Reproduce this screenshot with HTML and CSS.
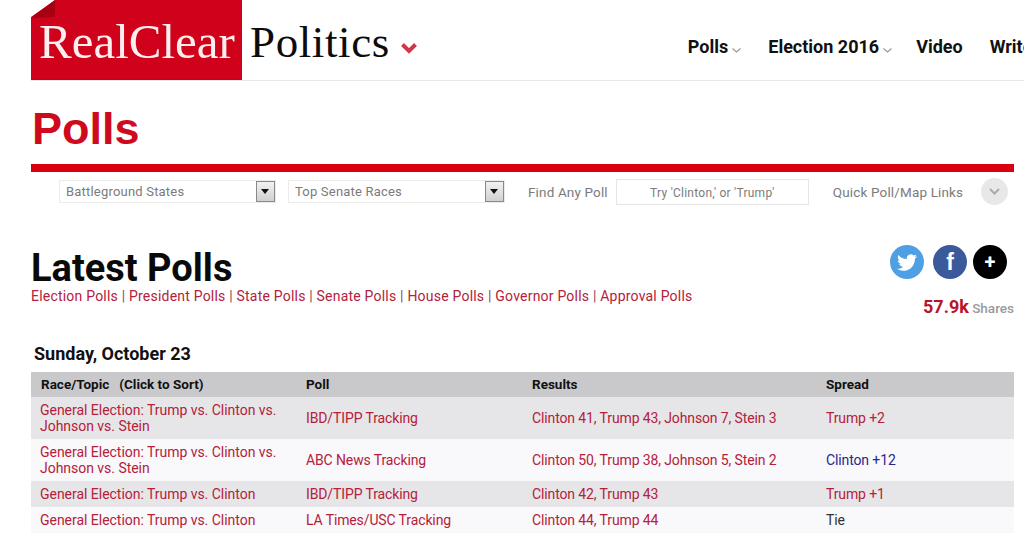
FILE: index.html
```html
<!DOCTYPE html>
<html lang="en">
<head>
<meta charset="utf-8">
<title>Polls - RealClearPolitics</title>
<link rel="stylesheet" href="styles.css">
</head>
<body>
<header class="site-header">
  <a class="logo-red">
    <svg class="fold" width="25" height="18" viewBox="0 0 25 18"><path d="M0 18V17L24 0H0Z" fill="#fff"/><path d="M0 18L24 0V17Z" fill="#a80012"/></svg>
    <span class="logo-red-text">RealClear</span>
  </a>
  <span class="logo-black">Politics</span>
  <svg class="logo-caret" width="18" height="12" viewBox="0 0 18 12"><path d="M2.500 2.500L9 9L15.500 2.500" fill="none" stroke="#d0384a" stroke-width="4"/></svg>
  <nav class="main-nav">
    <a class="nav-item">Polls<svg class="nav-caret" width="9" height="5" viewBox="0 0 9 5"><path d="M.5.5L4.500 4L8.500.5" fill="none" stroke="#999" stroke-width="1.2"/></svg></a>
    <a class="nav-item">Election 2016<svg class="nav-caret" width="9" height="5" viewBox="0 0 9 5"><path d="M.5.5L4.500 4L8.500.5" fill="none" stroke="#999" stroke-width="1.2"/></svg></a>
    <a class="nav-item">Video</a>
    <a class="nav-item">Writers</a>
  </nav>
</header>
<main class="content">
  <h1 class="page-title">Polls</h1>
  <div class="filters">
    <div class="select"><span>Battleground States</span><i class="select-btn"></i></div>
    <div class="select"><span>Top Senate Races</span><i class="select-btn"></i></div>
    <span class="filter-label find-label">Find Any Poll</span>
    <div class="search">Try 'Clinton,' or 'Trump'</div>
    <span class="filter-label quick-label">Quick Poll/Map Links</span>
    <span class="quick-btn"><svg width="11" height="7" viewBox="0 0 11 7"><path d="M1 1L5.500 5.500L10 1" fill="none" stroke="#aaa" stroke-width="2"/></svg></span>
  </div>
  <section class="latest">
    <div class="latest-main">
      <h2 class="latest-title">Latest Polls</h2>
      <p class="poll-links"><a>Election Polls</a> | <a>President Polls</a> | <a>State Polls</a> | <a>Senate Polls</a> | <a>House Polls</a> | <a>Governor Polls</a> | <a>Approval Polls</a></p>
    </div>
    <div class="social">
      <div class="social-icons">
        <span class="circle twitter"><svg width="20" height="17" viewBox="0 0 24 20"><path fill="#fff" d="M24 2.400c-.9.400-1.800.700-2.800.800 1-.6 1.800-1.600 2.200-2.700-1 .6-2 1-3.100 1.200C19.300.7 18 0 16.600 0c-2.700 0-4.900 2.200-4.900 4.900 0 .4 0 .8.100 1.100C7.700 5.800 4.100 3.900 1.700.9 1.200 1.600 1 2.500 1 3.400c0 1.700.9 3.200 2.200 4.100-.8 0-1.600-.2-2.200-.6v.1c0 2.400 1.700 4.400 3.900 4.800-.4.100-.8.200-1.300.2-.3 0-.6 0-.9-.1.600 2 2.400 3.400 4.600 3.400-1.700 1.300-3.800 2.100-6.100 2.100-.4 0-.8 0-1.200-.1C2.200 19.200 4.800 20 7.500 20c9.100 0 14-7.500 14-14v-.6c1-.7 1.800-1.600 2.500-2.600z"/></svg></span>
        <span class="circle facebook">f</span>
        <span class="circle more">+</span>
      </div>
      <p class="shares"><b>57.9k</b> Shares</p>
    </div>
  </section>
  <h3 class="date">Sunday, October 23</h3>
  <table class="polls">
    <colgroup><col class="col-race"><col class="col-poll"><col class="col-results"><col class="col-spread"></colgroup>
    <thead>
      <tr><th>Race/Topic &nbsp; (Click to Sort)</th><th>Poll</th><th>Results</th><th>Spread</th></tr>
    </thead>
    <tbody>
      <tr class="odd"><td>General Election: Trump vs. Clinton vs. Johnson vs. Stein</td><td>IBD/TIPP Tracking</td><td>Clinton 41, Trump 43, Johnson 7, Stein 3</td><td>Trump +2</td></tr>
      <tr><td>General Election: Trump vs. Clinton vs. Johnson vs. Stein</td><td>ABC News Tracking</td><td>Clinton 50, Trump 38, Johnson 5, Stein 2</td><td class="blue">Clinton +12</td></tr>
      <tr class="odd"><td>General Election: Trump vs. Clinton</td><td>IBD/TIPP Tracking</td><td>Clinton 42, Trump 43</td><td>Trump +1</td></tr>
      <tr><td>General Election: Trump vs. Clinton</td><td>LA Times/USC Tracking</td><td>Clinton 44, Trump 44</td><td class="tie">Tie</td></tr>
    </tbody>
  </table>
</main>
</body>
</html>
```
FILE: styles.css
```css
* { box-sizing: border-box; }
html, body { margin: 0; padding: 0; }
body {
  width: 1024px;
  height: 534px;
  overflow: hidden;
  background: #fff;
  color: #000;
  font-family: Roboto, "Liberation Sans", sans-serif;
}
.site-header {
  display: flex;
  align-items: flex-start;
  height: 81px;
  margin-left: 31px;
  border-bottom: 1px solid #e8e8e8;
  overflow: hidden;
}
.logo-red {
  position: relative;
  display: block;
  flex: none;
  width: 211px;
  height: 80px;
  background: #d0021b;
  border-bottom: 1px solid #a8101f;
  padding: 17px 0 0 8px;
}
.fold { position: absolute; top: 0; left: 0; }
.logo-red-text, .logo-black {
  font-family: "Liberation Serif", serif;
  line-height: 50px;
  display: block;
}
.logo-red-text { font-size: 49px; color: #fbeeee; white-space: nowrap; }
.logo-black { font-size: 45px; margin: 17px 0 0 8px; letter-spacing: .6px; color: #0c0c0c; }
.logo-caret { flex: none; margin: 42px 0 0 10px; }
.main-nav {
  display: flex;
  flex: none;
  margin: 36px 0 0 270px;
  gap: 27px;
  font-size: 18px;
  line-height: 21px;
  font-weight: 700;
  color: #111;
  white-space: nowrap;
}
.nav-item { display: block; }
.nav-item:nth-child(3) { margin-left: -3px; }
.nav-caret { margin-left: 4px; vertical-align: 0; }
.content { margin: 0 10px 0 31px; }
.page-title {
  margin: 0;
  padding: 22px 0 0 1px;
  height: 91px;
  border-bottom: 8px solid #d9000f;
  font-family: "Liberation Sans", sans-serif;
  font-size: 45px;
  line-height: 52px;
  font-weight: 700;
  color: #cf0a1c;
}
.filters {
  display: flex;
  align-items: center;
  height: 33px;
  padding: 6px 0 0 28px;
  font-size: 13.5px;
  color: #7b7b7b;
}
.select {
  display: flex;
  align-items: center;
  justify-content: space-between;
  flex: none;
  width: 217px;
  height: 23px;
  margin-right: 12px;
  padding: 0 0 0 6px;
  border: 1px solid #ebebeb;
  font-size: 13px;
  letter-spacing: .2px;
}
.select-btn {
  position: relative;
  display: block;
  width: 19px;
  height: 21px;
  background: linear-gradient(#f2f2f2, #d0d0d0);
  border: 1px solid #8a8a8a;
}
.select-btn::after {
  content: "";
  position: absolute;
  top: 7px;
  left: 4px;
  border: 4px solid transparent;
  border-top: 5px solid #111;
  border-bottom: 0;
}
.filter-label { flex: none; letter-spacing: .15px; }
.find-label { margin-left: 11px; }
.search {
  flex: none;
  width: 193px;
  height: 26px;
  margin: 0 24px 0 8px;
  border: 1px solid #e6e6e6;
  font-size: 12px;
  line-height: 26px;
  text-align: center;
  letter-spacing: .25px;
}
.quick-btn {
  display: flex;
  align-items: center;
  justify-content: center;
  flex: none;
  width: 27px;
  height: 27px;
  margin-left: 18px;
  border-radius: 50%;
  background: #e8e8e9;
}
.latest {
  display: flex;
  justify-content: space-between;
  height: 139px;
  padding-top: 42px;
}
.latest-title {
  margin: 0;
  font-size: 38px;
  line-height: 42px;
  font-weight: 700;
  color: #0a0a0a;
}
.poll-links {
  margin: -2px 0 0;
  font-size: 14px;
  line-height: 18px;
  letter-spacing: .21px;
  color: #8c4a58;
}
.poll-links a { color: #b5203a; }
.social { flex: none; width: 124px; margin-top: -2px; }
.social-icons { display: flex; gap: 6px; }
.social-icons .circle:first-child { margin-right: 3px; }
.circle {
  display: flex;
  align-items: center;
  justify-content: center;
  width: 34px;
  height: 34px;
  border-radius: 50%;
  color: #fff;
  font-weight: 700;
}
.twitter { background: #4f9fe4; }
.facebook { background: #3a5a9c; font-size: 23px; font-family: "Liberation Sans", sans-serif; }
.more { background: #000; font-size: 20px; }
.shares {
  margin: 17px 0 0 33px;
  font-size: 13.5px;
  line-height: 21px;
  font-weight: 500;
  color: #9a9a9a;
  white-space: nowrap;
}
.shares b { font-size: 18px; font-weight: 700; color: #b8142a; }
.date {
  margin: -1px 0 0;
  padding-left: 3px;
  height: 29px;
  font-size: 18px;
  line-height: 22px;
  font-weight: 700;
  color: #111;
}
.polls {
  width: 983px;
  table-layout: fixed;
  border-collapse: collapse;
  font-size: 14px;
  letter-spacing: -.12px;
}
.col-race { width: 265px; }
.col-poll { width: 226px; }
.col-results { width: 294px; }
.col-spread { width: 198px; }
.polls th, .polls td { padding: 0 10px; vertical-align: middle; text-align: left; }
.polls td:first-child { padding-left: 9px; letter-spacing: -.03px; }
.polls th {
  height: 25px;
  padding-bottom: 2px;
  background: #c9c9cb;
  font-size: 13.5px;
  line-height: 16px;
  font-weight: 700;
  color: #111;
  letter-spacing: 0;
}
.polls td {
  height: 26px;
  line-height: 16px;
  padding-top: 5px;
  padding-bottom: 5px;
  background: #f9f8fa;
  color: #b5203a;
}
.polls .odd td { background: #e6e6e8; }
.polls td.blue { color: #27278f; }
.polls td.tie { color: #333; }
```
